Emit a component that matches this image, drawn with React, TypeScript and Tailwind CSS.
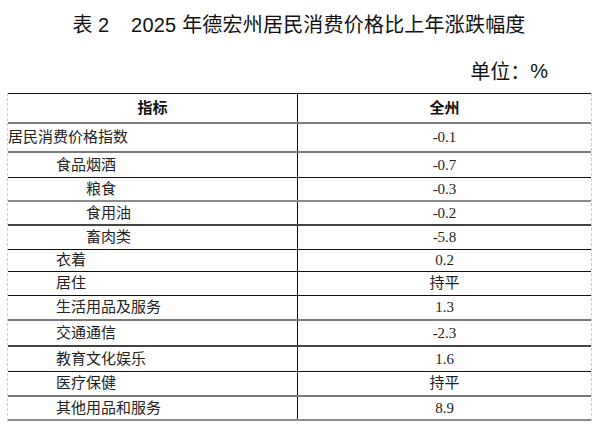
import React from "react";

type Row = { label: string; value: string; level: number; h: number; line: string };

const rows: Row[] = [
  { label: "居民消费价格指数", value: "-0.1", level: 0, h: 29, line: "border-b-2 border-[#7a7a7a]" },
  { label: "食品烟酒", value: "-0.7", level: 1, h: 25, line: "border-b border-[#111]" },
  { label: "粮食", value: "-0.3", level: 2, h: 24, line: "border-b-2 border-[#8a8a8a]" },
  { label: "食用油", value: "-0.2", level: 2, h: 24, line: "border-b-2 border-[#444]" },
  { label: "畜肉类", value: "-5.8", level: 2, h: 24, line: "border-b border-[#111]" },
  { label: "衣着", value: "0.2", level: 1, h: 22, line: "border-b border-[#111]" },
  { label: "居住", value: "持平", level: 1, h: 24, line: "border-b border-[#111]" },
  { label: "生活用品及服务", value: "1.3", level: 1, h: 25, line: "border-b-2 border-[#7a7a7a]" },
  { label: "交通通信", value: "-2.3", level: 1, h: 26, line: "border-b-2 border-[#444]" },
  { label: "教育文化娱乐", value: "1.6", level: 1, h: 25, line: "border-b border-[#111]" },
  { label: "医疗保健", value: "持平", level: 1, h: 25, line: "border-b-2 border-[#7a7a7a]" },
  { label: "其他用品和服务", value: "8.9", level: 1, h: 24, line: "border-b-2 border-[#8a8a8a]" },
];

const indent = ["pl-0", "pl-[48px]", "pl-[78px]"];

export default function App() {
  return (
    <div className="w-[600px] h-[435px] bg-white overflow-hidden text-[#111]">
      <div
        className="h-[50px] flex items-center justify-center text-[20px] whitespace-pre pr-[2px]"
        style={{ fontFamily: '"Liberation Sans", "Noto Sans CJK SC", sans-serif' }}
      >
        <span>表 2</span>
        <span className="inline-block w-[22px]" />
        <span className="tracking-[0.2px]">2025 年德宏州居民消费价格比上年涨跌幅度</span>
      </div>
      <div
        className="h-[43px] flex items-start justify-end pr-[52px] pt-[6px] text-[20px]"
        style={{ fontFamily: '"Noto Sans CJK SC", sans-serif' }}
      >
        <span>单位：</span>
        <span style={{ fontFamily: '"Liberation Sans", sans-serif' }}>%</span>
      </div>
      <div
        className="ml-[7px] w-[585px] border-x border-dashed border-[#cfcfcf] text-[15px] text-[#222]"
        style={{ fontFamily: '"Liberation Serif", "Noto Sans CJK SC", serif' }}
      >
        <div className="h-[31px] flex box-border border-t border-[#111] border-b-2 border-b-[#7a7a7a] font-bold text-[#111]">
          <div className="w-[290px] border-r border-[#111] flex items-center justify-center">指标</div>
          <div className="flex-1 flex items-center justify-center">全州</div>
        </div>
        {rows.map((r) => (
          <div key={r.label} className={`flex box-border ${r.line}`} style={{ height: r.h }}>
            <div className={`w-[290px] border-r border-[#111] flex items-center ${indent[r.level]}`}>
              {r.label}
            </div>
            <div className="flex-1 flex items-center justify-center">{r.value}</div>
          </div>
        ))}
      </div>
    </div>
  );
}
